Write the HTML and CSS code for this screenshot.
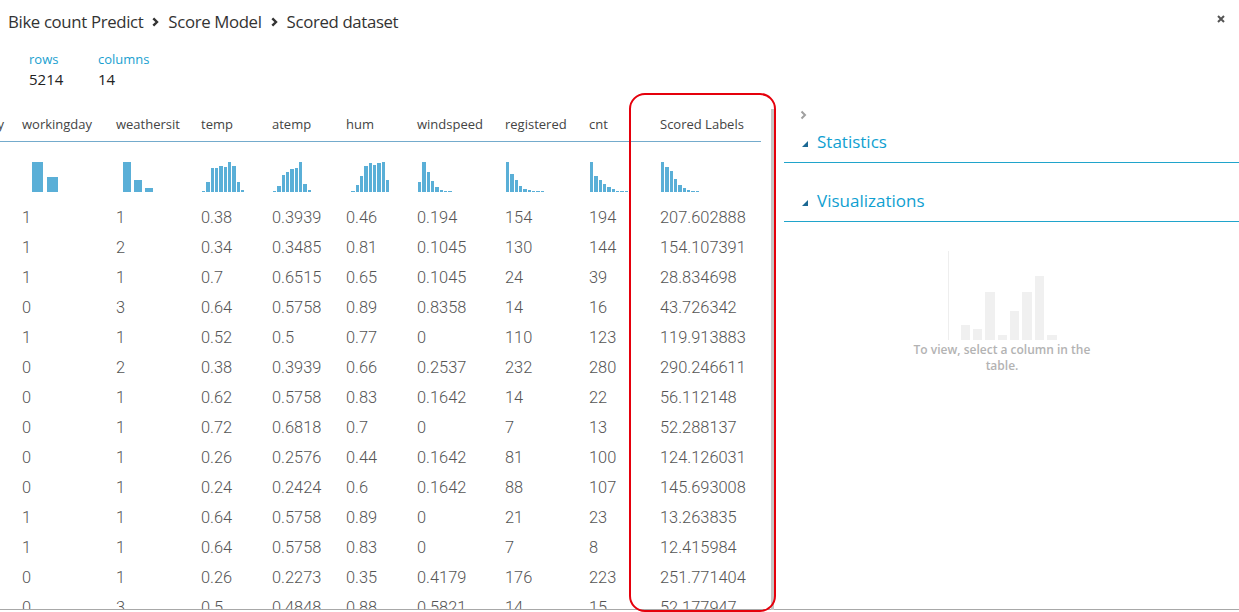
FILE: index.html
```html
<!DOCTYPE html>
<html>
<head>
<meta charset="utf-8">
<link rel="stylesheet" href="styles.css">
</head>
<body>
<div class="page">
  <header class="topbar">
    <nav class="crumbs">
      <span>Bike count Predict</span>
      <svg class="chev" width="7" height="10" viewBox="0 0 7 10"><path d="M1.3 1.3 L5 5 L1.3 8.7" fill="none" stroke="#333" stroke-width="2.4"/></svg>
      <span>Score Model</span>
      <svg class="chev" width="7" height="10" viewBox="0 0 7 10"><path d="M1.3 1.3 L5 5 L1.3 8.7" fill="none" stroke="#333" stroke-width="2.4"/></svg>
      <span>Scored dataset</span>
    </nav>
    <svg class="close" width="8" height="8" viewBox="0 0 8 8"><path d="M1 1 L7 7 M7 1 L1 7" stroke="#555" stroke-width="2"/></svg>
  </header>

  <section class="summary">
    <div class="stat"><div class="stat-label">rows</div><div class="stat-value">5214</div></div>
    <div class="stat"><div class="stat-label">columns</div><div class="stat-value">14</div></div>
  </section>

  <main class="main">
    <div class="table-pane">
      <div class="table-area">
        <div class="table">
          <div class="row head">
            <div>holiday</div><div>workingday</div><div>weathersit</div><div>temp</div><div>atemp</div><div>hum</div><div>windspeed</div><div>registered</div><div>cnt</div><div>Scored Labels</div>
          </div>
          <div class="row hists">
            <div></div>
            <div><div class="hist wide"><i style="height:30px"></i><i style="height:15px"></i></div></div>
            <div><div class="hist mid"><i style="height:30px"></i><i style="height:12px"></i><i style="height:4px"></i></div></div>
            <div><div class="hist"><i style="height:1px"></i><i style="height:10px"></i><i style="height:24px"></i><i style="height:24px"></i><i style="height:26px"></i><i style="height:25px"></i><i style="height:30px"></i><i style="height:26px"></i><i style="height:10px"></i><i style="height:2px"></i></div></div>
            <div><div class="hist"><i style="height:1px"></i><i style="height:6px"></i><i style="height:17px"></i><i style="height:20px"></i><i style="height:23px"></i><i style="height:24px"></i><i style="height:30px"></i><i style="height:8px"></i><i style="height:2px"></i></div></div>
            <div><div class="hist"><i style="height:0px"></i><i style="height:1px"></i><i style="height:7px"></i><i style="height:16px"></i><i style="height:26px"></i><i style="height:29px"></i><i style="height:27px"></i><i style="height:29px"></i><i style="height:30px"></i><i style="height:12px"></i></div></div>
            <div><div class="hist"><i style="height:10px"></i><i style="height:30px"></i><i style="height:20px"></i><i style="height:11px"></i><i style="height:5px"></i><i style="height:2px"></i><i style="height:1px"></i><i style="height:1px"></i></div></div>
            <div><div class="hist"><i style="height:30px"></i><i style="height:18px"></i><i style="height:12px"></i><i style="height:6px"></i><i style="height:3px"></i><i style="height:2px"></i><i style="height:1px"></i><i style="height:1px"></i><i style="height:1px"></i></div></div>
            <div><div class="hist"><i style="height:30px"></i><i style="height:16px"></i><i style="height:12px"></i><i style="height:8px"></i><i style="height:5px"></i><i style="height:3px"></i><i style="height:1px"></i><i style="height:1px"></i><i style="height:1px"></i></div></div>
            <div><div class="hist"><i style="height:30px"></i><i style="height:25px"></i><i style="height:21px"></i><i style="height:13px"></i><i style="height:7px"></i><i style="height:4px"></i><i style="height:2px"></i><i style="height:1px"></i><i style="height:1px"></i></div></div>
          </div>
          <div class="row data"><div></div><div>1</div><div>1</div><div>0.38</div><div>0.3939</div><div>0.46</div><div>0.194</div><div>154</div><div>194</div><div>207.602888</div></div>
          <div class="row data"><div></div><div>1</div><div>2</div><div>0.34</div><div>0.3485</div><div>0.81</div><div>0.1045</div><div>130</div><div>144</div><div>154.107391</div></div>
          <div class="row data"><div></div><div>1</div><div>1</div><div>0.7</div><div>0.6515</div><div>0.65</div><div>0.1045</div><div>24</div><div>39</div><div>28.834698</div></div>
          <div class="row data"><div></div><div>0</div><div>3</div><div>0.64</div><div>0.5758</div><div>0.89</div><div>0.8358</div><div>14</div><div>16</div><div>43.726342</div></div>
          <div class="row data"><div></div><div>1</div><div>1</div><div>0.52</div><div>0.5</div><div>0.77</div><div>0</div><div>110</div><div>123</div><div>119.913883</div></div>
          <div class="row data"><div></div><div>0</div><div>2</div><div>0.38</div><div>0.3939</div><div>0.66</div><div>0.2537</div><div>232</div><div>280</div><div>290.246611</div></div>
          <div class="row data"><div></div><div>0</div><div>1</div><div>0.62</div><div>0.5758</div><div>0.83</div><div>0.1642</div><div>14</div><div>22</div><div>56.112148</div></div>
          <div class="row data"><div></div><div>0</div><div>1</div><div>0.72</div><div>0.6818</div><div>0.7</div><div>0</div><div>7</div><div>13</div><div>52.288137</div></div>
          <div class="row data"><div></div><div>0</div><div>1</div><div>0.26</div><div>0.2576</div><div>0.44</div><div>0.1642</div><div>81</div><div>100</div><div>124.126031</div></div>
          <div class="row data"><div></div><div>0</div><div>1</div><div>0.24</div><div>0.2424</div><div>0.6</div><div>0.1642</div><div>88</div><div>107</div><div>145.693008</div></div>
          <div class="row data"><div></div><div>1</div><div>1</div><div>0.64</div><div>0.5758</div><div>0.89</div><div>0</div><div>21</div><div>23</div><div>13.263835</div></div>
          <div class="row data"><div></div><div>1</div><div>1</div><div>0.64</div><div>0.5758</div><div>0.83</div><div>0</div><div>7</div><div>8</div><div>12.415984</div></div>
          <div class="row data"><div></div><div>0</div><div>1</div><div>0.26</div><div>0.2273</div><div>0.35</div><div>0.4179</div><div>176</div><div>223</div><div>251.771404</div></div>
          <div class="row data"><div></div><div>0</div><div>3</div><div>0.5</div><div>0.4848</div><div>0.88</div><div>0.5821</div><div>14</div><div>15</div><div>52.177947</div></div>
        </div>
      </div>
      <div class="vscroll"></div>
    </div>

    <aside class="side">
      <div class="collapse">
        <svg width="7" height="10" viewBox="0 0 7 10"><path d="M1.5 1.5 L5 5 L1.5 8.5" fill="none" stroke="#a0a0a0" stroke-width="2"/></svg>
      </div>
      <div class="section first"><span class="tri"></span><span class="section-title">Statistics</span></div>
      <div class="section second"><span class="tri"></span><span class="section-title">Visualizations</span></div>
      <div class="placeholder">
        <div class="ph-chart">
          <i style="height:15px"></i><i style="height:11px"></i><i style="height:48px"></i><i style="height:5px"></i><i style="height:29px"></i><i style="height:48px"></i><i style="height:64px"></i><i style="height:5px"></i>
        </div>
        <p class="ph-text">To view, select a column in the<br>table.</p>
      </div>
    </aside>
  </main>

  <div class="highlight"></div>
</div>
</body>
</html>
```

FILE: styles.css
```css
* { box-sizing: border-box; }
html, body { margin: 0; padding: 0; background: #fff; }
body { width: 1239px; height: 612px; overflow: hidden; font-family: "Open Sans", "Noto Sans", sans-serif; color: #333; }
.page { position: relative; width: 1239px; height: 612px; }

.topbar { height: 42px; display: flex; align-items: center; justify-content: space-between; padding: 0 14px 0 8px; }
.crumbs { display: flex; align-items: center; gap: 9px; font-size: 16.8px; color: #333; letter-spacing: -0.35px; }
.chev { display: block; margin-top: 2px; }
.close { display: block; margin-top: -4px; }

.summary { height: 58px; display: flex; padding-left: 29px; padding-top: 8px; }
.stat { width: 69px; }
.stat-label { font-size: 13px; color: #1a9fd0; line-height: 18px; }
.stat-value { font-size: 15px; color: #222; line-height: 22px; }

.main { display: flex; height: 510px; border-bottom: 1px solid #a8a8a8; }
.table-pane { width: 784px; display: flex; }
.table-area { width: 771px; overflow: hidden; }
.table { width: 801px; margin-left: -40px; }
.row { display: grid; grid-template-columns: 62px 94px 85px 71px 74px 71px 88px 84px 71px 101px; }
.row.head { height: 42px; align-items: end; padding-bottom: 8px; border-bottom: 1px solid #74abcc; font-size: 13px; color: #444; line-height: 18px; }
.row.hists { height: 60px; align-items: end; padding-bottom: 10px; }
.row.data { height: 30px; align-items: center; font-family: Roboto, "Liberation Sans", sans-serif; font-weight: 300; font-size: 16.4px; color: #555; }

.hist { display: flex; align-items: flex-end; gap: 1px; height: 30px; margin-left: 1px; }
.hist i { display: block; width: 3.33px; background: #5aafd7; }
.hist.wide { gap: 4px; margin-left: 10px; }
.hist.wide i { width: 11px; }
.hist.mid { gap: 3px; margin-left: 7px; }
.hist.mid i { width: 8px; }

.vscroll { width: 3px; margin-top: 9px; height: 501px; background: #c6c6c6; }

.side { flex: 1; padding-top: 8px; }
.collapse { height: 14px; padding-left: 16px; display: flex; align-items: center; }
.section { display: flex; align-items: flex-end; gap: 9px; padding-left: 18px; border-bottom: 1px solid #20a4cb; }
.section.first { height: 41px; padding-bottom: 10px; }
.section.second { height: 59px; padding-bottom: 10px; }
.section-title { font-size: 17px; color: #109fd1; line-height: 20px; }
.tri { width: 0; height: 0; border-left: 6px solid transparent; border-bottom: 6px solid #1b6893; margin-bottom: 5px; }

.placeholder { width: 200px; margin: 29px 0 0 118px; display: flex; flex-direction: column; align-items: center; }
.ph-chart { width: 109px; height: 89px; display: flex; align-items: flex-end; gap: 3px; padding-left: 12px; border-left: 1px solid #eeeeee; }
.ph-chart i { display: block; width: 9.5px; background: #f0f0f0; }
.ph-text { margin: 2px 0 0; text-align: center; font-size: 12px; font-weight: 600; color: #b3b3b3; line-height: 16px; }

.highlight { position: absolute; left: 629px; top: 93px; width: 147px; height: 519px; border: 2px solid #e5000c; border-radius: 16px; pointer-events: none; }
```
